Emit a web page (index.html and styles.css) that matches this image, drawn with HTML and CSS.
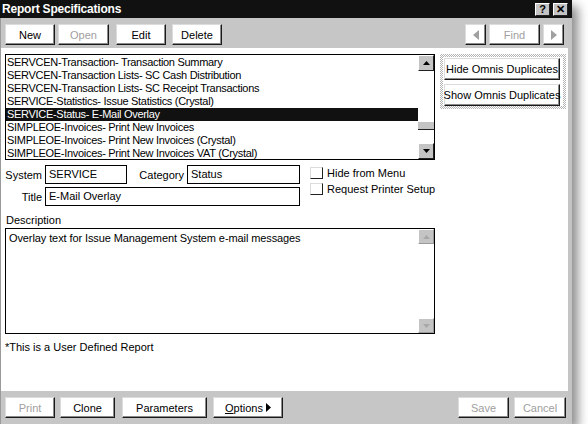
FILE: index.html
```html
<!DOCTYPE html>
<html lang="en">
 <head>
   <meta charset="UTF-8">
   <title>Report Specifications</title>
   <link rel="stylesheet" href="styles.css">
 </head>
 <body>
 <div class="window">
	<!-- 标题栏 -->
	<div class="titlebar">
		<span class="title">Report Specifications</span>
		<span class="tbtn">?</span>
		<span class="tbtn">&#x2715;</span>
	</div>

	<!-- 工具栏 -->
	<div class="toolbar">
		<span class="btn w50">New</span>
		<span class="btn w51 off">Open</span>
		<span class="btn w50 ml7">Edit</span>
		<span class="btn w50 ml6">Delete</span>
		<span class="spacer"></span>
		<span class="btn w21 off"><svg width="6" height="10"><polygon points="6,0 6,10 0,5" fill="#a0a0a0"/></svg></span>
		<span class="btn w51 off">Find</span>
		<span class="btn w21 off"><svg width="6" height="10"><polygon points="0,0 0,10 6,5" fill="#a0a0a0"/></svg></span>
	</div>

	<!-- 主体 -->
	<div class="content">
		<div class="toprow">
			<div class="list">
				<div class="rows">
					<div class="row">SERVCEN-Transaction- Transaction Summary</div>
					<div class="row">SERVCEN-Transaction Lists- SC Cash Distribution</div>
					<div class="row">SERVCEN-Transaction Lists- SC Receipt Transactions</div>
					<div class="row">SERVICE-Statistics- Issue Statistics (Crystal)</div>
					<div class="row sel">SERVICE-Status- E-Mail Overlay</div>
					<div class="row">SIMPLEOE-Invoices- Print New Invoices</div>
					<div class="row">SIMPLEOE-Invoices- Print New Invoices (Crystal)</div>
					<div class="row">SIMPLEOE-Invoices- Print New Invoices VAT (Crystal)</div>
				</div>
				<div class="vscroll">
					<span class="sbtn"><svg width="7" height="4"><polygon points="0,4 7,4 3.5,0" fill="#000"/></svg></span>
					<span class="track"><span class="thumb"></span></span>
					<span class="sbtn"><svg width="7" height="4"><polygon points="0,0 7,0 3.5,4" fill="#000"/></svg></span>
				</div>
			</div>
			<div class="dupgroup">
				<span class="btn dup">Hide Omnis Duplicates</span>
				<span class="btn dup">Show Omnis Duplicates</span>
			</div>
		</div>

		<div class="formrow">
			<div class="fields">
				<div class="line">
					<span class="lbl">System</span>
					<span class="field w82">SERVICE</span>
					<span class="lbl cat">Category</span>
					<span class="field w113">Status</span>
				</div>
				<div class="line">
					<span class="lbl">Title</span>
					<span class="field w255">E-Mail Overlay</span>
				</div>
			</div>
			<div class="checks">
				<div class="check"><span class="box"></span>Hide from Menu</div>
				<div class="check"><span class="box"></span>Request Printer Setup</div>
			</div>
		</div>

		<div class="desclbl">Description</div>
		<div class="desc">
			<div class="desctext">Overlay text for Issue Management System e-mail messages</div>
			<div class="vscroll">
				<span class="sbtn"><svg width="7" height="4"><polygon points="0,4 7,4 3.5,0" fill="#a8a8a8"/></svg></span>
				<span class="track"></span>
				<span class="sbtn"><svg width="7" height="4"><polygon points="0,0 7,0 3.5,4" fill="#a8a8a8"/></svg></span>
			</div>
		</div>
		<div class="note">*This is a User Defined Report</div>
	</div>

	<!-- 底部按钮 -->
	<div class="bottombar">
		<span class="btn w50 off">Print</span>
		<span class="btn w55 ml5">Clone</span>
		<span class="btn w85 ml7">Parameters</span>
		<span class="btn w70 ml6"><u>O</u>ptions&nbsp;<svg width="5" height="9"><polygon points="0,0 0,9 5,4.5" fill="#000"/></svg></span>
		<span class="spacer"></span>
		<span class="btn w51 off">Save</span>
		<span class="btn w52 ml5 off">Cancel</span>
	</div>
 </div>
 </body>
</html>
```

FILE: styles.css
```css
body{
	margin:0;
	background:#fff;
	font-family:"Liberation Sans", Arial, sans-serif;
	font-size:11px;
	color:#000;
}
/* 窗口 */
.window{
	width:572px;
	height:424px;
	box-sizing:border-box;
	display:flex;
	flex-direction:column;
	border-left:1px solid #9a9a9a;
	border-right:4px solid #c4c4c4;
	box-shadow:6px 6px 10px rgba(0,0,0,0.45);
}
.titlebar{
	height:18px;
	background:#111;
	display:flex;
	align-items:center;
	padding:0 0 0 2px;
	margin-left:-1px;
	margin-right:-4px;
	gap:3px;
}
.title{
	flex:1;
	color:#fff;
	font-weight:bold;
	font-size:12px;
	letter-spacing:-0.2px;
}
.tbtn{
	width:13px;
	height:11px;
	background:#c4c4c4;
	border:1px solid;
	border-color:#fff #222 #222 #fff;
	font-size:11px;
	font-weight:bold;
	line-height:11px;
	text-align:center;
}
.tbtn:last-child{
	margin-right:4px;
}
.toolbar{
	height:30px;
	box-sizing:border-box;
	background:#c6c6c6;
	display:flex;
	align-items:flex-start;
	padding:6px 4px 0 4px;
	gap:3px;
}
.spacer{
	flex:1;
}
/* 按钮 */
.btn{
	height:21px;
	box-sizing:border-box;
	background:#fff;
	border:1px solid;
	border-color:#dcdcdc #1a1a1a #1a1a1a #dcdcdc;
	box-shadow:inset -1px -1px 0 #8a8a8a;
	display:flex;
	align-items:center;
	justify-content:center;
	white-space:nowrap;
}
.btn.off{
	color:#a0a0a0;
}
.w21{width:21px;}
.w50{width:50px;}
.w51{width:51px;}
.w52{width:52px;}
.w55{width:55px;}
.w70{width:70px;}
.w85{width:85px;}
.ml5{margin-left:2px;}
.ml6{margin-left:3px;}
.ml7{margin-left:4px;}

.content{
	flex:1;
	background:#fff;
	padding:6px 0 0 4px;
}
.toprow{
	display:flex;
	gap:5px;
}
.list{
	width:430px;
	height:106px;
	box-sizing:border-box;
	border:1px solid #000;
	display:flex;
}
.rows{
	flex:1;
	padding-top:1px;
}
.row{
	height:13px;
	line-height:13px;
	padding-left:1px;
	white-space:nowrap;
	letter-spacing:-0.3px;
}
.row.sel{
	background:#111;
	color:#fff;
}
.vscroll{
	width:16px;
	display:flex;
	flex-direction:column;
}
.sbtn{
	height:16px;
	box-sizing:border-box;
	background:#c4c4c4;
	border:1px solid;
	border-color:#fff #222 #222 #fff;
	display:flex;
	align-items:center;
	justify-content:center;
}
.track{
	flex:1;
	background:#fff;
	position:relative;
}
.thumb{
	position:absolute;
	left:0;
	right:0;
	top:50px;
	height:7px;
	background:#c4c4c4;
	border-top:1px solid #fff;
	border-bottom:1px solid #222;
}
.dupgroup{
	width:126px;
	height:55px;
	box-sizing:border-box;
	border:3px solid transparent;
	background:
		linear-gradient(#fff,#fff) padding-box,
		repeating-conic-gradient(#b4b4b4 0 25%, #fff 0 50%) 0 0/2px 2px border-box;
	padding:0 3px 0 1px;
	display:flex;
	flex-direction:column;
	justify-content:center;
	gap:4px;
}
.btn.dup{
	width:116px;
	height:22px;
}
/* 表单 */
.formrow{
	display:flex;
	margin-top:5px;
}
.fields{
	width:296px;
	display:flex;
	flex-direction:column;
	gap:3px;
}
.line{
	display:flex;
	align-items:center;
}
.lbl{
	width:37px;
	text-align:right;
	padding-right:3px;
}
.lbl.cat{
	width:57px;
}
.field{
	height:19px;
	box-sizing:border-box;
	border:1px solid #000;
	padding:0 3px;
	line-height:17px;
}
.w82{width:82px;}
.w113{width:113px;}
.w255{width:255px;}
.checks{
	margin-left:9px;
	padding-top:2px;
	display:flex;
	flex-direction:column;
	gap:4px;
}
.check{
	display:flex;
	align-items:center;
	gap:4px;
	height:12px;
}
.box{
	width:13px;
	height:12px;
	box-sizing:border-box;
	border:1px solid;
	border-color:#dcdcdc #222 #222 #dcdcdc;
	background:#fff;
}
.desclbl{
	margin-top:8px;
	height:13px;
	line-height:13px;
	padding-left:1px;
}
.desc{
	margin-top:1px;
	width:430px;
	height:106px;
	box-sizing:border-box;
	border:1px solid #000;
	display:flex;
}
.desc .sbtn{
	border-color:#fff #9a9a9a #9a9a9a #fff;
	height:15px;
}
.desctext{
	flex:1;
	padding:3px 3px;
	letter-spacing:-0.1px;
}
.note{
	margin-top:7px;
}
.bottombar{
	height:33px;
	box-sizing:border-box;
	background:#c6c6c6;
	display:flex;
	align-items:flex-start;
	padding:6px 2px 0 4px;
	gap:3px;
}
```
